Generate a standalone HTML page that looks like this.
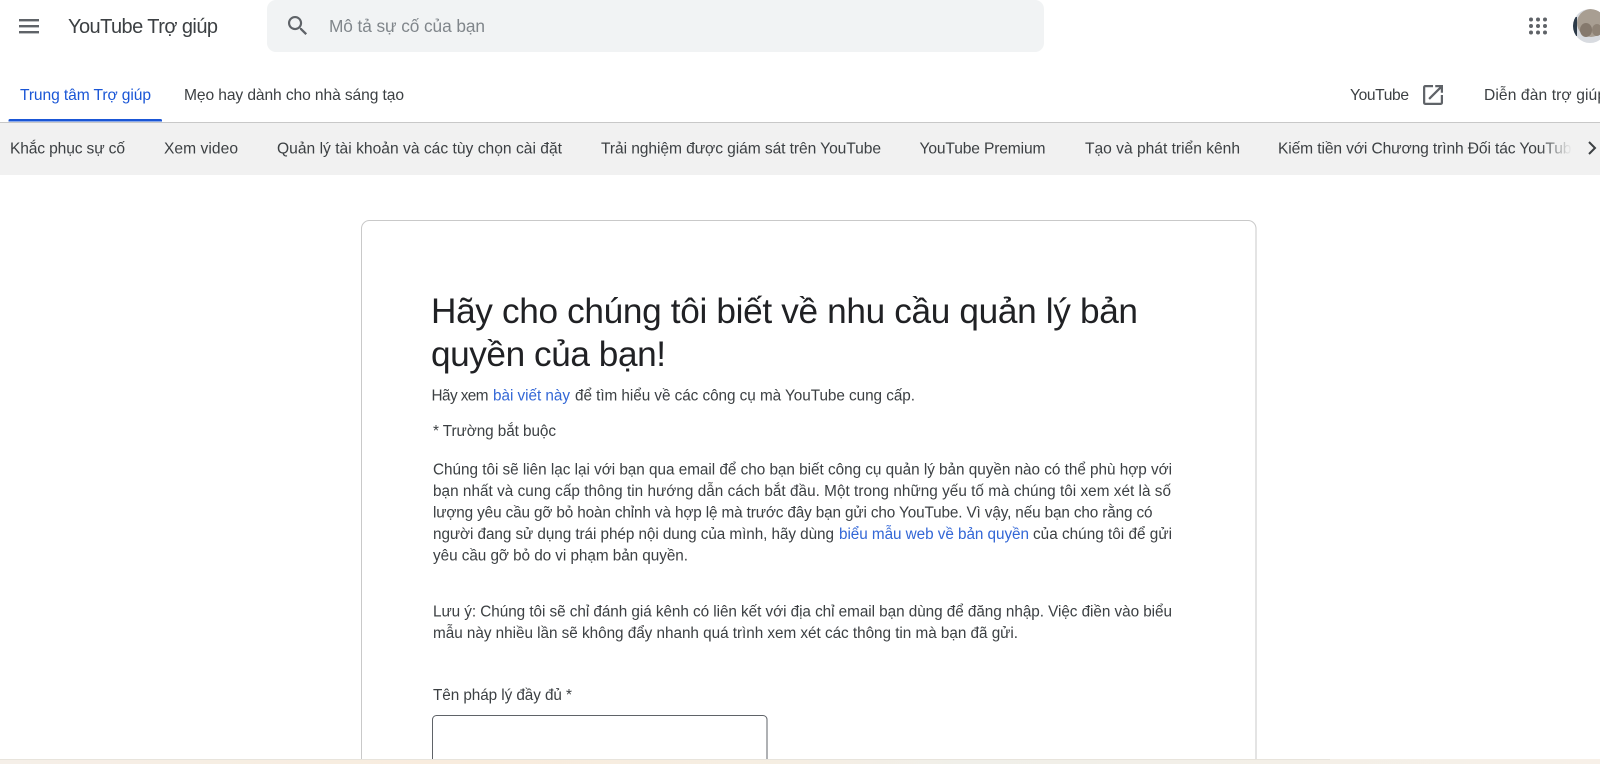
<!DOCTYPE html>
<html lang="vi">
<head>
<meta charset="utf-8">
<title>YouTube Trợ giúp</title>
<style>
html,body{margin:0;padding:0;width:1600px;height:764px;overflow:hidden;background:#fff}
svg{display:block;position:absolute;left:0;top:0;filter:blur(.3px)}
text{font-family:"Liberation Sans",sans-serif;white-space:pre}
.b{font-size:15.3px;fill:#3c4043}
.l{font-size:15.3px;fill:#3367d6}
.t{font-size:15.6px;fill:#3c4043}
.n{font-size:15.6px;fill:#3c4043}
</style>
</head>
<body>
<svg width="1600" height="764" viewBox="0 0 1600 764" xmlns="http://www.w3.org/2000/svg">
  <defs>
    <linearGradient id="fade" x1="0" x2="1" y1="0" y2="0">
      <stop offset="0" stop-color="#f1f1f1" stop-opacity="0"/>
      <stop offset="1" stop-color="#f1f1f1" stop-opacity="1"/>
    </linearGradient>
    <linearGradient id="strip" x1="0" x2="1" y1="0" y2="0">
      <stop offset="0" stop-color="#f5efe8"/>
      <stop offset=".3" stop-color="#f8ecdd"/>
      <stop offset=".5" stop-color="#f5eee3"/>
      <stop offset=".6" stop-color="#f0efe9"/>
      <stop offset=".8" stop-color="#f3efe7"/>
      <stop offset="1" stop-color="#f7f0e8"/>
    </linearGradient>
    <clipPath id="av"><circle cx="1590" cy="26" r="17"/></clipPath>
    <clipPath id="scroller"><rect x="0" y="123" width="1572" height="52"/></clipPath>
  </defs>

  <!-- header -->
  <g fill="#5f6368">
    <rect x="19" y="19" width="20" height="2.400"/>
    <rect x="19" y="25" width="20" height="2.400"/>
    <rect x="19" y="31" width="20" height="2.400"/>
  </g>
  <text x="68" y="33" font-size="20" fill="#3c4043" textLength="150" lengthAdjust="spacing">YouTube Trợ giúp</text>
  <rect x="267" y="0" width="777" height="52" rx="9" fill="#f1f3f4"/>
  <path transform="translate(284.7 12.7) scale(1.09)" fill="#5f6368" d="M15.5 14h-.79l-.28-.27C15.41 12.59 16 11.11 16 9.5 16 5.91 13.09 3 9.5 3S3 5.91 3 9.5 5.91 16 9.5 16c1.61 0 3.09-.59 4.23-1.57l.27.28v.79l5 4.99L20.49 19l-4.99-5zm-6 0C7.01 14 5 11.99 5 9.5S7.01 5 9.5 5 14 7.01 14 9.5 11.99 14 9.5 14z"/>
  <text x="329" y="32" font-size="17.300" fill="#80868b" textLength="156" lengthAdjust="spacing">Mô tả sự cố của bạn</text>
  <g fill="#5f6368">
    <circle cx="1531" cy="19.5" r="2"/><circle cx="1538" cy="19.5" r="2"/><circle cx="1545" cy="19.5" r="2"/>
    <circle cx="1531" cy="26" r="2"/><circle cx="1538" cy="26" r="2"/><circle cx="1545" cy="26" r="2"/>
    <circle cx="1531" cy="32.5" r="2"/><circle cx="1538" cy="32.5" r="2"/><circle cx="1545" cy="32.5" r="2"/>
  </g>
  <g clip-path="url(#av)">
    <rect x="1573" y="9" width="34" height="34" fill="#d8dbe0"/>
    <ellipse cx="1591" cy="23" rx="14" ry="14" fill="#a89e92"/>
    <rect x="1573" y="17" width="4" height="19" fill="#2c3a48"/>
    <ellipse cx="1586" cy="30" rx="6" ry="7" fill="#85796d"/>
    <ellipse cx="1597" cy="30" rx="5" ry="6" fill="#8f8376"/>
  </g>

  <!-- tabs -->
  <text class="t" x="20" y="100" style="fill:#1a56d6" textLength="131" lengthAdjust="spacing">Trung tâm Trợ giúp</text>
  <text class="t" x="184" y="100" textLength="220" lengthAdjust="spacing">Mẹo hay dành cho nhà sáng tạo</text>
  <path d="M8.5 121.500v-1a1.500 1.500 0 0 1 1.500-1.500h150.500a1.500 1.500 0 0 1 1.500 1.500v1z" fill="#1a56d6"/>
  <text class="t" x="1350" y="100" textLength="59" lengthAdjust="spacing">YouTube</text>
  <path transform="translate(1419.7 81.7) scale(1.11)" fill="#5f6368" d="M19 19H5V5h7V3H5c-1.110 0-2 .9-2 2v14c0 1.100.89 2 2 2h14c1.100 0 2-.9 2-2v-7h-2v7zM14 3v2h3.590l-9.830 9.830 1.410 1.410L19 6.410V10h2V3h-7z"/>
  <text class="t" x="1484" y="100" textLength="122" lengthAdjust="spacing">Diễn đàn trợ giúp</text>
  <rect x="0" y="122" width="1600" height="1" fill="#c8c8c8"/>

  <!-- category bar -->
  <rect x="0" y="123" width="1600" height="52" fill="#f1f1f1"/>
  <g clip-path="url(#scroller)">
    <text class="n" x="10" y="153.500" textLength="115" lengthAdjust="spacing">Khắc phục sự cố</text>
    <text class="n" x="164" y="153.500" textLength="74" lengthAdjust="spacing">Xem video</text>
    <text class="n" x="277" y="153.500" textLength="285" lengthAdjust="spacing">Quản lý tài khoản và các tùy chọn cài đặt</text>
    <text class="n" x="601" y="153.500" textLength="280" lengthAdjust="spacing">Trải nghiệm được giám sát trên YouTube</text>
    <text class="n" x="919.500" y="153.500" textLength="126" lengthAdjust="spacing">YouTube Premium</text>
    <text class="n" x="1085" y="153.500" textLength="155" lengthAdjust="spacing">Tạo và phát triển kênh</text>
    <text class="n" x="1278" y="153.500" textLength="302" lengthAdjust="spacing">Kiếm tiền với Chương trình Đối tác YouTube</text>
  </g>
  <rect x="1540" y="123" width="32" height="52" fill="url(#fade)"/>
  <polyline points="1589,142 1595,148 1589,154" fill="none" stroke="#3c4043" stroke-width="2"/>

  <!-- card -->
  <path d="M361.500 764V228.500a8 8 0 0 1 8-8H1248a8 8 0 0 1 8 8V764" fill="#fff" stroke="#c9c9c9"/>
  <text x="431" y="323" font-size="35.200" fill="#202124" textLength="707" lengthAdjust="spacing">Hãy cho chúng tôi biết về nhu cầu quản lý bản</text>
  <text x="431" y="366" font-size="35.200" fill="#202124" textLength="235" lengthAdjust="spacing">quyền của bạn!</text>

  <text class="b" x="431.500" y="400.500" textLength="57" lengthAdjust="spacing">Hãy xem</text>
  <text class="l" x="493" y="400.500" textLength="77" lengthAdjust="spacing">bài viết này</text>
  <text class="b" x="575" y="400.500" textLength="340" lengthAdjust="spacing">để tìm hiểu về các công cụ mà YouTube cung cấp.</text>

  <text class="b" x="433" y="436" textLength="123" lengthAdjust="spacing">* Trường bắt buộc</text>

  <text class="b" x="433" y="474.500" textLength="739" lengthAdjust="spacing">Chúng tôi sẽ liên lạc lại với bạn qua email để cho bạn biết công cụ quản lý bản quyền nào có thể phù hợp với</text>
  <text class="b" x="433" y="496" textLength="738" lengthAdjust="spacing">bạn nhất và cung cấp thông tin hướng dẫn cách bắt đầu. Một trong những yếu tố mà chúng tôi xem xét là số</text>
  <text class="b" x="433" y="517.500" textLength="719.500" lengthAdjust="spacing">lượng yêu cầu gỡ bỏ hoàn chỉnh và hợp lệ mà trước đây bạn gửi cho YouTube. Vì vậy, nếu bạn cho rằng có</text>
  <text class="b" x="433" y="539" textLength="401" lengthAdjust="spacing">người đang sử dụng trái phép nội dung của mình, hãy dùng</text>
  <text class="l" x="839" y="539" textLength="190" lengthAdjust="spacing">biểu mẫu web về bản quyền</text>
  <text class="b" x="1033" y="539" textLength="139" lengthAdjust="spacing">của chúng tôi để gửi</text>
  <text class="b" x="433" y="560.500" textLength="255" lengthAdjust="spacing">yêu cầu gỡ bỏ do vi phạm bản quyền.</text>

  <text class="b" x="433" y="616.500" textLength="739" lengthAdjust="spacing">Lưu ý: Chúng tôi sẽ chỉ đánh giá kênh có liên kết với địa chỉ email bạn dùng để đăng nhập. Việc điền vào biểu</text>
  <text class="b" x="433" y="638" textLength="585" lengthAdjust="spacing">mẫu này nhiều lần sẽ không đẩy nhanh quá trình xem xét các thông tin mà bạn đã gửi.</text>

  <text class="b" x="433" y="700" textLength="139" lengthAdjust="spacing">Tên pháp lý đầy đủ *</text>
  <path d="M432.500 764V719.500a4 4 0 0 1 4-4H763a4 4 0 0 1 4 4V764" fill="#fff" stroke="#5f6368"/>

  <!-- bottom strip -->
  <rect x="0" y="759" width="1600" height="5" fill="url(#strip)"/>
  <rect x="0" y="759" width="1330" height="1" fill="#e8e4dc"/>
</svg>
</body>
</html>
